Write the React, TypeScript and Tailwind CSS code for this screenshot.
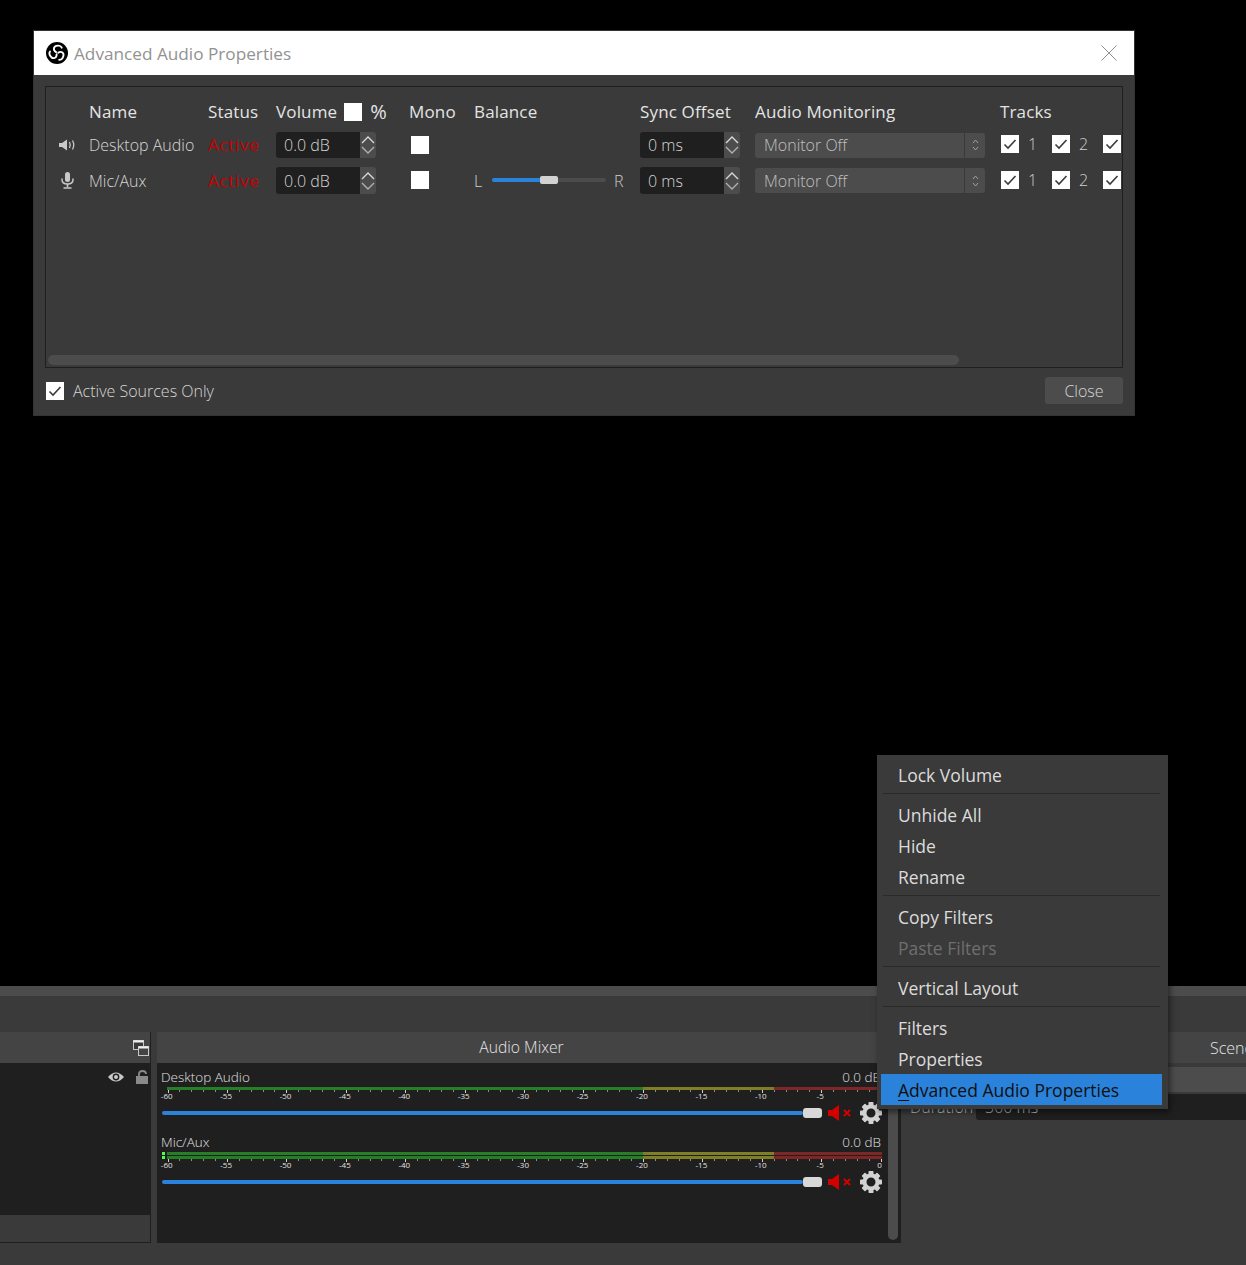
import React from "react";

const cols = "grid grid-cols-[43px_119px_68px_133px_65px_166px_115px_245px_122px]";

function Check({ className = "" }: { className?: string }) {
  return (
    <span className={`flex h-[18px] w-[18px] shrink-0 items-center justify-center bg-white ${className}`}>
      <svg width="14" height="14" viewBox="0 0 14 14" fill="none">
        <path d="M1.5 7.5 L5 11 L12.5 3" stroke="#3a3a3a" strokeWidth="1.6" />
      </svg>
    </span>
  );
}

function Chevron({ up, color }: { up?: boolean; color: string }) {
  return (
    <svg width="14" height="9" viewBox="0 0 14 9" fill="none">
      <path d={up ? "M1 8 L7 2 L13 8" : "M1 1 L7 7 L13 1"} stroke={color} strokeWidth="1.4" />
    </svg>
  );
}

function Spin({ value, width }: { value: string; width: string }) {
  return (
    <div className="flex items-stretch self-stretch">
      <div className={`flex items-center rounded-l-[3px] bg-[#1f1f1f] pl-[8px] text-[#d6d6d6] ${width}`}>{value}</div>
      <div className="flex w-[16px] flex-col items-center justify-center gap-[2px] rounded-r-[3px] bg-[#4c4c4c]">
        <Chevron up color="#d8d8d8" />
        <Chevron color="#b0b0b0" />
      </div>
    </div>
  );
}

function Combo() {
  return (
    <div className="flex h-[25px] w-[230px] items-center rounded-[3px] bg-[#4c4c4c] text-[#c0c0c0]">
      <span className="w-[209px] pl-[9px]">Monitor Off</span>
      <span className="flex h-full w-[21px] flex-col items-center justify-center gap-[2px] border-l border-[#3a3a3a]">
        <svg width="7" height="5" viewBox="0 0 7 5" fill="none"><path d="M1 4 L3.5 1 L6 4" stroke="#a0a0a0" /></svg>
        <svg width="7" height="5" viewBox="0 0 7 5" fill="none"><path d="M1 1 L3.5 4 L6 1" stroke="#a0a0a0" /></svg>
      </span>
    </div>
  );
}

function Tracks({ first }: { first?: boolean }) {
  return (
    <div className={`flex items-center text-[#d0d0d0] ${first ? "mb-[2px]" : "mb-[1px]"}`}>
      <Check className="ml-[1px]" />
      <span className="ml-[9px] w-[24px]">1</span>
      <Check />
      <span className="ml-[9px] w-[24px]">2</span>
      <Check />
    </div>
  );
}

function SpeakerIcon() {
  return (
    <svg width="17" height="12" viewBox="0 0 17 12" fill="none">
      <path d="M0 4 H3 L8 0.5 V11.5 L3 8 H0 Z" fill="#c8c8c8" />
      <path d="M10.5 3 Q12 6 10.5 9 M13.5 1.5 Q16 6 13.5 10.5" stroke="#c8c8c8" strokeWidth="1.3" />
    </svg>
  );
}

function MicIcon() {
  return (
    <svg width="13" height="17" viewBox="0 0 13 17" fill="none">
      <rect x="4" y="0" width="5" height="10" rx="2.5" fill="#c8c8c8" />
      <path d="M1 6.5 V7.5 Q1 12 6.5 12 Q12 12 12 7.5 V6.5" stroke="#c8c8c8" strokeWidth="1.5" />
      <path d="M6.5 12 V15 M2.5 16 H10.5" stroke="#c8c8c8" strokeWidth="1.6" />
    </svg>
  );
}

function ObsLogo() {
  return (
    <svg width="22" height="22" viewBox="0 0 24 24" fill="none">
      <circle cx="12" cy="12" r="12" fill="#000" />
      {[0, 120, 240].map((r) => (
        <g key={r} transform={`rotate(${r} 12 12)`}>
          <path d="M11 11 C 7.5 9, 7.5 4.5, 13 4 C 15 3.9 16.6 4.8 17.2 6.2" stroke="#fff" strokeWidth="2" strokeLinecap="round" />
        </g>
      ))}
    </svg>
  );
}

function Row({ icon, name, balance, first }: { icon: React.ReactNode; name: string; balance?: boolean; first?: boolean }) {
  return (
    <div className={`${cols} items-center ${first ? "h-[26px]" : "h-[27px]"}`}>
      <div className="flex justify-center">{icon}</div>
      <div className="text-[#d6d6d6]">{name}</div>
      <div className="whitespace-nowrap text-[17px] font-normal tracking-[0.7px] text-[#c80000]">Active</div>
      <Spin value="0.0 dB" width="w-[84px]" />
      <div className={`pl-[2px] ${first ? "" : "mb-[1px]"}`}>
        <span className="block h-[18px] w-[18px] bg-white" />
      </div>
      <div>
        {balance && (
          <div className="flex items-center text-[#d0d0d0]">
            <span className="w-[18px]">L</span>
            <div className="relative mb-[1px] h-[4px] w-[114px] rounded-full bg-[#4c4c4c]">
              <div className="h-full w-[50px] rounded-full bg-[#2a82da]" />
              <div className="absolute left-[48px] top-[-2px] h-[8px] w-[18px] rounded-[2px] bg-[#d2d2d2]" />
            </div>
            <span className="ml-[8px]">R</span>
          </div>
        )}
      </div>
      <Spin value="0 ms" width="w-[84px]" />
      <Combo />
      <Tracks first={first} />
    </div>
  );
}

const labels = ["-60", "-55", "-50", "-45", "-40", "-35", "-30", "-25", "-20", "-15", "-10", "-5", "0"];

function Bar() {
  return (
    <div className="flex h-[3px] w-[715px]">
      <div className="w-[476px] bg-[#267f26]" />
      <div className="w-[131px] bg-[#7f7f26]" />
      <div className="w-[108px] bg-[#7f2626]" />
    </div>
  );
}

function Ticks() {
  const t = [];
  for (let i = 0; i <= 60; i++) {
    const x = Math.round(0.5 + i * 11.885) + 0.5;
    t.push(<line key={i} x1={x} x2={x} y1="0" y2={i % 5 === 0 ? 3 : 2} stroke={i % 5 === 0 ? "#d0d0d0" : "#8c8c8c"} />);
  }
  return (
    <svg width="716" height="3" className="block">
      {t}
    </svg>
  );
}

function Gear() {
  const teeth = [0, 45, 90, 135, 180, 225, 270, 315];
  return (
    <svg width="22" height="22" viewBox="0 0 22 22">
      {teeth.map((r) => (
        <rect key={r} x="8.5" y="0" width="5" height="5" rx="0.8" fill="#d2d2d2" transform={`rotate(${r} 11 11)`} />
      ))}
      <circle cx="11" cy="11" r="6.5" fill="none" stroke="#d2d2d2" strokeWidth="4" />
    </svg>
  );
}

function Muted() {
  return (
    <>
      <svg width="11" height="16" viewBox="0 0 11 16" className="ml-[6px]">
        <path d="M0 5 H4 L11 0 V16 L4 11 H0 Z" fill="#d40000" />
      </svg>
      <svg width="8" height="8" viewBox="0 0 8 8" className="ml-[4px]">
        <path d="M1 1 L7 7 M7 1 L1 7" stroke="#d40000" strokeWidth="2" />
      </svg>
    </>
  );
}

function Strip({ name, mic }: { name: string; mic?: boolean }) {
  return (
    <div className="w-[720px]">
      <div className="ml-[-1px] flex h-[17px] w-[720px] items-start justify-between pt-[1px] text-[13.5px] font-light leading-none text-[#e0e0e0]">
        <span>{name}</span>
        <span>0.0 dB</span>
      </div>
      <div className="flex">
        <div className="w-[5px] shrink-0">
          {mic && (
            <div className="flex flex-col gap-[1px]">
              <div className="h-[3px] w-[3px] bg-[#4cff4c]" />
              <div className="h-[3px] w-[3px] bg-[#4cff4c]" />
            </div>
          )}
        </div>
        <div className="flex flex-col">
          <div className="flex flex-col gap-[1px]">
            <Bar />
            {mic && <Bar />}
          </div>
          <Ticks />
        </div>
      </div>
      <div className="ml-[-25px] mt-[-1px] flex h-[8px] w-[773px] text-[8px] leading-[8px] text-[#e0e0e0]">
        {labels.map((l) => (
          <span key={l} className="w-[59.42px] shrink-0 text-center">{l}</span>
        ))}
      </div>
      <div className="mt-[2px] flex h-[22px] items-center">
        <div className="h-[4px] w-[641px] rounded-full bg-[#2a82da]" />
        <div className="h-[10px] w-[19px] rounded-[3px] bg-[#d8d8d8]" />
        <Muted />
        <div className="ml-[9px]"><Gear /></div>
      </div>
    </div>
  );
}

function MenuItem({ label, kind, u }: { label: string; kind?: "off" | "on"; u?: boolean }) {
  const tone = kind === "off" ? "text-[#6e6e6e]" : kind === "on" ? "bg-[#2a82da] text-[#101010]" : "text-[#dcdcdc]";
  return (
    <div className={`ml-[4px] mr-[6px] flex h-[31px] items-center pl-[17px] pt-[2px] ${tone}`}>
      {u ? (<><span className="underline underline-offset-[3px]">{label[0]}</span>{label.slice(1)}</>) : label}
    </div>
  );
}

function Sep() {
  return (
    <div className="ml-[6px] mr-[8px] h-[9px] pt-[3px]">
      <div className="h-px bg-[#2a2a2a]" />
    </div>
  );
}

export default function App() {
  return (
    <div className="relative flex h-[1265px] w-[1246px] flex-col overflow-hidden bg-black font-['Open_Sans',sans-serif]">
      {/* Dialog */}
      <div className="ml-[33px] mt-[30px] h-[386px] w-[1102px] border border-[#333333] bg-[#3a3a3a] text-[16px] font-light">
        <div className="flex h-[44px] items-center bg-white pl-[12px] pr-[17px]">
          <ObsLogo />
          <span className="ml-[6px] pt-[2px] text-[17.2px] font-normal text-[#929292]">Advanced Audio Properties</span>
          <svg width="16" height="16" viewBox="0 0 16 16" className="ml-auto" fill="none">
            <path d="M0.5 0.5 L15.5 15.5 M15.5 0.5 L0.5 15.5" stroke="#8e8e8e" />
          </svg>
        </div>
        <div className="ml-[11px] mt-[11px] h-[282px] w-[1078px] overflow-hidden border border-[#1f1f1f] pt-[12px]">
          <div className={`${cols} h-[24px] items-center text-[17px] font-normal tracking-[0.15px] text-[#e4e4e4]`}>
            <span />
            <span>Name</span>
            <span>Status</span>
            <span className="flex items-center whitespace-nowrap">
              Volume
              <span className="ml-[7px] block h-[18px] w-[18px] bg-white" />
              <span className="ml-[8px] text-[20px] leading-none">%</span>
            </span>
            <span>Mono</span>
            <span>Balance</span>
            <span>Sync Offset</span>
            <span>Audio Monitoring</span>
            <span>Tracks</span>
          </div>
          <div className="mt-[9px]">
            <Row icon={<SpeakerIcon />} name="Desktop Audio" first />
          </div>
          <div className="mt-[9px]">
            <Row icon={<MicIcon />} name="Mic/Aux" balance />
          </div>
          <div className="ml-[2px] mt-[161px] h-[10px] w-[911px] rounded-full bg-[#4c4c4c]" />
        </div>
        <div className="ml-[12px] mt-[9px] flex h-[27px] w-[1077px] items-center">
          <Check />
          <span className="ml-[9px] text-[#d6d6d6]">Active Sources Only</span>
          <button className="ml-auto flex h-[27px] w-[78px] items-center justify-center rounded-[3px] bg-[#4c4c4c] text-[#d6d6d6]">Close</button>
        </div>
      </div>

      {/* OBS main window bottom */}
      <div className="mt-auto h-[279px] bg-[#3a3a3a] text-[16px]">
        <div className="h-[10px] bg-[#4c4c4c]" />
        <div className="mt-[36px] flex items-start">
          <div className="flex h-[211px] w-[151px] flex-col border-b border-r border-[#1f1f1f]">
            <div className="flex h-[31px] items-center justify-end bg-[#444444] pr-[1px]">
              <svg width="16" height="16" viewBox="0 0 16 16" fill="none">
                <rect x="0.5" y="0.5" width="10" height="9" fill="#3a3a3a" stroke="#c8c8c8" />
                <rect x="0.5" y="0.5" width="10" height="2" fill="#f0f0f0" />
                <rect x="5.5" y="6.5" width="10" height="9" fill="#444444" stroke="#c8c8c8" />
                <rect x="5.5" y="6.5" width="10" height="2" fill="#f0f0f0" />
              </svg>
            </div>
            <div className="flex h-[152px] items-start justify-end gap-[12px] bg-[#1f1f1f] pr-[2px] pt-[7px]">
              <svg width="16" height="12" viewBox="0 0 16 12" className="mt-[1px]">
                <path d="M0 6 Q8 -3 16 6 Q8 15 0 6 Z" fill="#c8c8c8" />
                <circle cx="8" cy="6" r="3.4" fill="#1f1f1f" />
                <circle cx="8" cy="6" r="2" fill="#c8c8c8" />
              </svg>
              <svg width="12" height="14" viewBox="0 0 12 14" fill="none">
                <path d="M3 7 V4 Q3 1 6.5 1 Q10 1 10 4" stroke="#8a8a8a" strokeWidth="1.8" />
                <rect x="0" y="6" width="12" height="8" fill="#8a8a8a" />
              </svg>
            </div>
            <div className="flex-1 bg-[#3a3a3a]" />
          </div>

          <div className="ml-[6px] h-[211px] w-[744px]">
            <div className="flex h-[31px] items-center justify-center bg-[#444444] pr-[15px] pt-[1px] text-[15.7px] font-light text-[#e4e4e4]">Audio Mixer</div>
            <div className="flex h-[180px] bg-[#1f1f1f] pl-[5px] pt-[7px]">
              <div className="flex w-[720px] flex-col gap-[11px]">
                <Strip name="Desktop Audio" />
                <Strip name="Mic/Aux" mic />
              </div>
              <div className="ml-[6px] h-[170px] w-[10px] rounded-full bg-[#4c4c4c]" />
            </div>
          </div>

          <div className="ml-[3px] min-w-0 flex-1 overflow-hidden">
            <div className="flex h-[31px] items-center overflow-hidden whitespace-nowrap bg-[#444444] pl-[306px] font-light text-[#e4e4e4]">Scene Transitions</div>
            <div className="mt-[4px] h-[25px] bg-[#4c4c4c]" />
            <div className="mt-[2px] flex h-[26px] items-center pl-[6px] font-light text-[#c8c8c8]">
              <span className="w-[66px]">Duration</span>
              <div className="flex h-full flex-1 items-center rounded-l-[3px] bg-[#1f1f1f] pl-[9px]">300 ms</div>
            </div>
          </div>
        </div>
      </div>

      {/* Context menu */}
      <div className="absolute left-[877px] top-[755px] h-[354px] w-[291px] bg-[#3a3a3a] py-[4px] text-[17.5px] shadow-[2px_3px_6px_rgba(0,0,0,0.5)]">
        <MenuItem label="Lock Volume" />
        <Sep />
        <MenuItem label="Unhide All" />
        <MenuItem label="Hide" />
        <MenuItem label="Rename" />
        <Sep />
        <MenuItem label="Copy Filters" />
        <MenuItem label="Paste Filters" kind="off" />
        <Sep />
        <MenuItem label="Vertical Layout" />
        <Sep />
        <MenuItem label="Filters" />
        <MenuItem label="Properties" />
        <MenuItem label="Advanced Audio Properties" kind="on" u />
      </div>
    </div>
  );
}
